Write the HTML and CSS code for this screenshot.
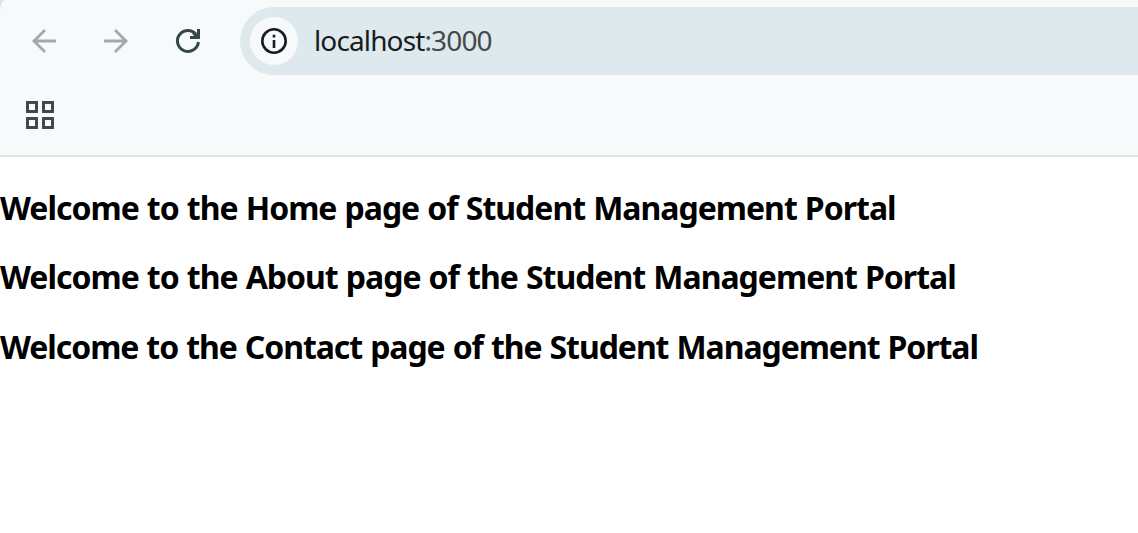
FILE: index.html
```html
<!DOCTYPE html>
<html lang="en">
<head>
<meta charset="utf-8">
<title>Student Management Portal</title>
<link rel="stylesheet" href="styles.css">
</head>
<body>
<header class="browser">
  <div class="toolbar">
    <svg class="nav muted" viewBox="0 0 24 24"><path d="M24 12H2M13 1L2 12l11 11"/></svg>
    <svg class="nav muted" viewBox="0 0 24 24"><path d="M0 12h22M11 1l11 11-11 11"/></svg>
    <svg class="nav reload" viewBox="0 0 24 24"><path d="M22.4 13A10.5 10.5 0 1 1 19.7 4.9"/><path class="solid" d="M21 0h3v10H14V7h4.2l-2-2 2.6-2.4L21 4.8z"/></svg>
    <div class="address">
      <span class="site-info"><svg class="info" viewBox="0 0 26 26"><circle cx="13" cy="13" r="11.7"/><path d="M13 12v8M13 6.8v2.7"/></svg></span>
      <span class="url">localhost<span class="port">:3000</span></span>
    </div>
  </div>
  <div class="bookmarks">
    <svg class="apps" viewBox="0 0 28 28"><path d="M1.5 1.5h9v9h-9zM17.5 1.5h9v9h-9zM1.5 17.5h9v9h-9zM17.5 17.5h9v9h-9z"/></svg>
  </div>
</header>
<main class="page">
  <h1 class="line">Welcome to the Home page of Student Management Portal</h1>
  <h1 class="line">Welcome to the About page of the Student Management Portal</h1>
  <h1 class="line contact">Welcome to the Contact page of the Student Management Portal</h1>
</main>
</body>
</html>
```
FILE: styles.css
```css
* { box-sizing: border-box; }
body { margin: 0; background: #fff; font-family: "Segoe UI", "Noto Sans", sans-serif; overflow: hidden; }
.browser { height: 157px; background: #cfe6ec; }
.toolbar { height: 82px; display: flex; align-items: center; padding-left: 32px; background: #f6fafb; border-top-left-radius: 5px 11px; }
.nav { width: 24px; height: 24px; margin-right: 48px; flex: none; fill: none; stroke-width: 2.8; overflow: visible; }
.muted { stroke: #a5a8a8; }
.reload { stroke: #36474c; stroke-width: 3; margin-right: 40px; }
.solid { fill: #36474c; stroke: none; }
.address { flex: 1; height: 68px; display: flex; align-items: center; padding-left: 10px; background: #dee9ed; border-radius: 34px 0 0 34px; }
.site-info { width: 48px; height: 48px; border-radius: 50%; background: #f6fafb; display: flex; align-items: center; justify-content: center; margin-right: 16px; }
.info { width: 26px; height: 26px; fill: none; stroke: #191c1d; stroke-width: 2.6; }
.url { font-size: 28px; line-height: 40px; padding-bottom: 2px; letter-spacing: -0.87px; color: #191c1d; white-space: nowrap; }
.port { color: #444a4c; }
.bookmarks { height: 75px; padding: 19px 0 0 26px; background: #f6fafb; border-bottom: 2px solid #dbe3e5; }
.apps { display: block; width: 28px; height: 28px; fill: none; stroke: #434747; stroke-width: 3; }
.page { padding-top: 29px; display: flex; flex-direction: column; gap: 25.4px; }
.line { margin: 0; font-size: 32px; line-height: 44px; font-weight: 700; letter-spacing: -1px; word-spacing: 0.75px; white-space: nowrap; }
.contact { letter-spacing: -1.06px; }
```
